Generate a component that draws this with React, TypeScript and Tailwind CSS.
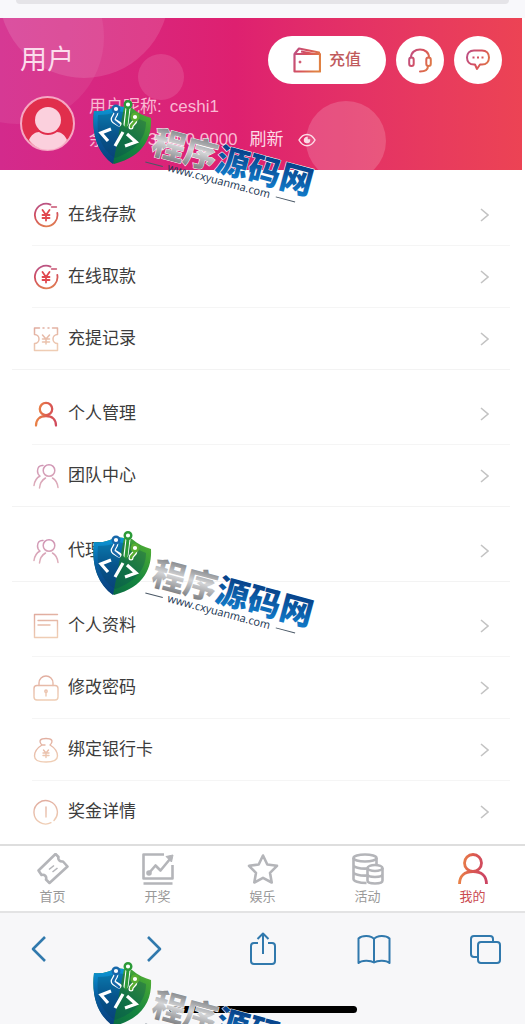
import type { ReactNode } from "react"

const FONT = "font-['Liberation_Sans','Noto_Sans_CJK_SC',sans-serif]"

type IconProps = { children: ReactNode; stroke?: string; width?: number }

function RowIcon({ children, stroke = "url(#peach)", width = 1.4 }: IconProps) {
  return (
    <svg
      viewBox="0 0 26 26"
      className="size-[26px] shrink-0"
      fill="none"
      stroke={stroke}
      strokeWidth={width}
      strokeLinecap="round"
      strokeLinejoin="round"
      aria-hidden="true"
    >
      {children}
    </svg>
  )
}

const YenIcon = () => (
  <RowIcon stroke="url(#berry)" width={1.8}>
    <path d="M17.500 2.600A11.300 11.300 0 1 0 24.300 11" />
    <path d="M18.500 5h5" strokeWidth={1.3} />
    <path d="M9.500 8l3.500 5 3.500-5M9.500 13h7M9.500 16h7M13 13v5.500" stroke="#e0484f" />
  </RowIcon>
)

const RecordIcon = () => (
  <RowIcon width={1.5}>
    <path d="M1.500 2h5M10 2h1M15 2h1M19.500 2h5v6.500a4.500 4.500 0 0 0 0 9V24.500h-23V17.500a4.500 4.500 0 0 0 0-9V2" />
    <path d="M9.500 9l3.500 4 3.500-4M9.500 13h7M9.500 16h7M13 13v5" />
  </RowIcon>
)

const PersonIcon = () => (
  <RowIcon stroke="url(#flame)" width={2.3}>
    <circle cx="13" cy="8" r="6.200" />
    <path d="M3 24.500c0-6 4-9.500 10-9.500s10 3.500 10 9.500" />
  </RowIcon>
)

const TeamIcon = () => (
  <RowIcon stroke="url(#mauve)" width={1.5}>
    <circle cx="16" cy="7.500" r="5.800" />
    <path d="M6.500 25c.5-5 2.500-8 6-10M19.500 15c3.500 2 5 5 5.500 9.500" />
    <path d="M10 2.500C6.500 2 4.500 4.500 4.500 8c0 2.500 1 4 2.500 5-3.500 2-5.500 5-6 9.500" />
  </RowIcon>
)

const ProfileIcon = () => (
  <RowIcon>
    <path d="M24.500 1.500h-23v23h23v-17H5M5 12h12" />
  </RowIcon>
)

const LockIcon = () => (
  <RowIcon>
    <rect x="1" y="10.500" width="24" height="14.500" rx="3" />
    <path d="M6 10.500V8a7 7 0 0 1 14 0v2.500M13 17v4" />
    <circle cx="13" cy="16.200" r="1.200" />
  </RowIcon>
)

const BagIcon = () => (
  <RowIcon>
    <path d="M9 8C7 6 6.500 4.500 7.500 3c1.500-2 9.500-2 11 0 1 1.500.5 3-1.500 5 5 3 7.500 6.500 7.500 11 0 4-3 6-11.500 6S1.500 23 1.500 19C1.500 14.500 4 11 9 8h3" />
    <path d="M10.500 13l2.500 3 2.500-3M10 16h6M10 18.500h6M13 16v4.500" />
  </RowIcon>
)

const InfoIcon = () => (
  <RowIcon>
    <path d="M21 21.500a11.700 11.700 0 1 0-3 2.200M13 8v10" />
  </RowIcon>
)

const groups = [
  [
    { label: "在线存款", icon: <YenIcon /> },
    { label: "在线取款", icon: <YenIcon /> },
    { label: "充提记录", icon: <RecordIcon /> },
  ],
  [
    { label: "个人管理", icon: <PersonIcon /> },
    { label: "团队中心", icon: <TeamIcon /> },
  ],
  [{ label: "代理中心", icon: <TeamIcon /> }],
  [
    { label: "个人资料", icon: <ProfileIcon /> },
    { label: "修改密码", icon: <LockIcon /> },
    { label: "绑定银行卡", icon: <BagIcon /> },
    { label: "奖金详情", icon: <InfoIcon /> },
  ],
]

const tabs = [
  {
    label: "首页",
    icon: (
      <g>
        <path d="M18.500 1l3 3c-.8 2.500 1.200 5 4.500 4.500l4.500 5L12.500 30l-3.500-3.500c1-3-1.500-5.500-4.500-4.500L1.500 17.500z" />
        <path d="M12 16.500l5-4M15.500 19l5-4" strokeWidth="1.600" />
      </g>
    ),
  },
  {
    label: "开奖",
    icon: (
      <g>
        <path d="M22 1.500H1.500v24h29V12M1.500 30.500h29" />
        <path d="M7 20l6.500-7.500 5 5L28 6" />
        <path d="M24 3.500l7-1.500-1.500 7z" fill="#b4b5b9" strokeWidth="1" />
        <circle cx="7" cy="20" r="1.500" fill="#b4b5b9" />
      </g>
    ),
  },
  {
    label: "娱乐",
    icon: <path d="M16 2.500l4.300 9 9.700 1.300-7 7 1.700 9.700L16 24.800l-8.700 4.700L9 19.800l-7-7 9.700-1.300z" />,
  },
  {
    label: "活动",
    icon: (
      <g>
        <ellipse cx="13" cy="5" rx="11.500" ry="3.500" />
        <path d="M1.500 5v21c0 2 5 4 13 4M24.500 5v6M1.500 12c0 2 6 4 14 3.500M1.500 19c0 2 6 4 14 3.500" />
        <ellipse cx="23" cy="15" rx="7.500" ry="3" />
        <path d="M15.500 15v12.500c0 4 15 4 15 0V15M15.500 21c0 4 15 4 15 0" />
      </g>
    ),
  },
  {
    label: "我的",
    active: true,
    icon: (
      <g stroke="url(#flame)" strokeWidth="2.800">
        <circle cx="16" cy="10" r="8.500" />
        <path d="M2.500 31c0-8 5-12.500 13.500-12.500S29.500 23 29.500 31" />
      </g>
    ),
  },
]

const browserButtons = [
  { label: "后退", icon: <path d="M26 8L14 20l12 12" strokeWidth="2.600" /> },
  { label: "前进", icon: <path d="M17 8l12 12-12 12" strokeWidth="2.600" /> },
  {
    label: "分享",
    icon: <path d="M15 14h-4a3 3 0 0 0-3 3v15a3 3 0 0 0 3 3h18a3 3 0 0 0 3-3V17a3 3 0 0 0-3-3h-4M20 25V5M14.500 10L20 4.500 25.500 10" />,
  },
  {
    label: "书签",
    icon: <path d="M20 10v23M20 10c-3-4-12-4-15.500-.5V34c3-3 12-3 15.500-.5 3.500-2.500 12.500-2.500 15.500.5V9.500C32 6 23 6 20 10z" />,
  },
  {
    label: "标签页",
    icon: (
      <g>
        <rect x="12" y="13" width="22" height="21" rx="3" />
        <path d="M12 28H8a3 3 0 0 1-3-3V10a3 3 0 0 1 3-3h16a3 3 0 0 1 3 3v3" />
      </g>
    ),
  },
]

function Defs() {
  return (
    <svg className="absolute size-0" aria-hidden="true">
      <defs>
        <linearGradient id="berry" gradientUnits="userSpaceOnUse" x1="6" y1="0" x2="12" y2="26">
          <stop offset="0" stopColor="#b5568d" />
          <stop offset="0.500" stopColor="#d24c5c" />
          <stop offset="1" stopColor="#e07f52" />
        </linearGradient>
        <linearGradient id="peach" gradientUnits="userSpaceOnUse" x1="0" y1="0" x2="6" y2="26">
          <stop offset="0" stopColor="#dfa99d" />
          <stop offset="1" stopColor="#efcdb4" />
        </linearGradient>
        <linearGradient id="mauve" gradientUnits="userSpaceOnUse" x1="0" y1="0" x2="0" y2="26">
          <stop offset="0" stopColor="#cf94b4" />
          <stop offset="1" stopColor="#dfb0bb" />
        </linearGradient>
        <linearGradient id="flame" gradientUnits="userSpaceOnUse" x1="2" y1="12" x2="28" y2="16">
          <stop offset="0" stopColor="#ec8a45" />
          <stop offset="0.500" stopColor="#db5a50" />
          <stop offset="1" stopColor="#cc4562" />
        </linearGradient>
        <linearGradient id="action" gradientUnits="userSpaceOnUse" x1="0" y1="0" x2="28" y2="12">
          <stop offset="0" stopColor="#b8508c" />
          <stop offset="0.500" stopColor="#d7505c" />
          <stop offset="1" stopColor="#e08243" />
        </linearGradient>
        <linearGradient id="shieldBlue" x1="0" y1="0" x2="0" y2="1">
          <stop offset="0" stopColor="#0d9ad8" />
          <stop offset="0.500" stopColor="#075b9e" />
          <stop offset="1" stopColor="#0a3f7c" />
        </linearGradient>
        <linearGradient id="shieldGreen" x1="1" y1="0" x2="0" y2="1">
          <stop offset="0" stopColor="#5bb531" />
          <stop offset="0.500" stopColor="#14843f" />
          <stop offset="1" stopColor="#066045" />
        </linearGradient>
        <linearGradient id="silver" x1="0" y1="0" x2="0" y2="1">
          <stop offset="0.200" stopColor="#85878a" />
          <stop offset="0.500" stopColor="#d4d5d7" />
          <stop offset="0.850" stopColor="#808286" />
        </linearGradient>
        <linearGradient id="ocean" x1="0" y1="0" x2="0" y2="1">
          <stop offset="0.200" stopColor="#073f86" />
          <stop offset="1" stopColor="#1388d8" />
        </linearGradient>
      </defs>
    </svg>
  )
}

function Watermark({ className }: { className: string }) {
  return (
    <svg
      viewBox="0 0 240 120"
      className={`pointer-events-none absolute left-[92px] h-[120px] w-[240px] overflow-visible ${className}`}
    >
      <path d="M2 13c8 1 16-1 22-5l16 2c6 5 12 8 19 10 1 18-6 38-37 46C7 56-1 38 2 13z" fill="url(#shieldGreen)" />
      <path d="M2 13c8 1 16-1 22-5l8 1-11 57C7 56-1 38 2 13z" fill="url(#shieldBlue)" />
      <path d="M6 17c7 0 13-1 19-4l13 2c5 4 10 7 16 9 0 14-8 28-31 36C9 51 4 37 6 17z" fill="#063f58" opacity="0.280" />
      <g fill="none" strokeLinecap="round">
        <g stroke="#fff" strokeWidth="5">
          <path d="M24 14c0 5-5 6-2 9l5 3M36 10l-2 16M43 22c0 4-4 3-4 7" />
        </g>
        <path d="M24 14c0 5-5 6-2 9l5 4" stroke="#1768aa" strokeWidth="2.500" />
        <path d="M36 10l-2 18" stroke="#2b9a37" strokeWidth="3" />
        <path d="M43 22c0 4-4 3-4 7" stroke="#58ad32" strokeWidth="2.500" />
      </g>
      <g fill="#fff" strokeWidth="2.400">
        <circle cx="24" cy="11" r="3.300" stroke="#1768aa" />
        <circle cx="36" cy="6.500" r="3.300" stroke="#2b9a37" />
        <circle cx="43" cy="19" r="3.300" stroke="#58ad32" />
      </g>
      <path
        d="M19 31L9 35l7 8M31 34l-8 14M35 36l9 8-11 4"
        fill="none"
        stroke="#fff"
        strokeWidth="3.200"
      />
      <g transform="translate(55 54) rotate(15)">
        <g
          className="font-['Noto_Sans_CJK_SC',sans-serif] text-[33px] font-black"
          stroke="#fff"
          strokeWidth="1"
          paintOrder="stroke"
        >
          <text x="3" y="0" fill="url(#silver)">程序</text>
          <text x="69" y="0" fill="url(#ocean)">源码网</text>
        </g>
        <text x="24" y="13" className="font-['Open_Sans',sans-serif] text-[11px] font-medium" fill="#16324f">
          www.cxyuanma.com
        </text>
        <path d="M1 10h18M136 10h20" stroke="#4a5866" strokeWidth="1" />
      </g>
    </svg>
  )
}

function Header() {
  return (
    <header className="relative mr-[3px] overflow-hidden bg-linear-to-r from-[#d32a8c] via-[#de2070] via-45% to-[#ec4354] px-5 pt-[18px] pb-[19px]">
      <svg className="absolute inset-0 size-full" fill="#fff" aria-hidden="true">
        <circle cx="17" cy="19" r="87" opacity="0.070" />
        <circle cx="84" cy="-25" r="85" opacity="0.120" />
        <circle cx="161" cy="59" r="23" opacity="0.120" />
        <circle cx="346" cy="123" r="40" opacity="0.170" />
      </svg>
      <div className="relative flex items-center justify-between">
        <h1 className="text-[27px] leading-8 text-[#fbdcec]">用户</h1>
        <div className="flex gap-[10px]">
          <button className="flex h-12 w-[118px] items-center justify-center gap-2 rounded-full bg-white text-[16px] font-medium text-[#c05a5c]">
            <svg viewBox="0 0 28 26" className="h-[26px] w-7" fill="none" stroke="url(#action)" strokeWidth="2.200" strokeLinejoin="round" aria-hidden="true">
              <path d="M1.500 7h25.500v17.500H1.500zM1.500 7L6 1.500l20 4V7M8 4.500l13 2.500" />
              <circle cx="7" cy="15" r="1" fill="#b8508c" strokeWidth="1" />
            </svg>
            充值
          </button>
          <button aria-label="客服" className="flex size-12 items-center justify-center rounded-full bg-white">
            <svg viewBox="0 0 24 25" className="h-[25px] w-6" fill="none" stroke="url(#action)" strokeWidth="2" strokeLinecap="round" aria-hidden="true">
              <path d="M3 9.500C3 4.500 7 1.500 12 1.500s9 3 9 8M20 18c0 4-3 5.500-8 5.500" />
              <rect x="1.200" y="9.500" width="4.500" height="8.500" rx="2.200" />
              <rect x="18.300" y="9.500" width="4.500" height="8.500" rx="2.200" />
            </svg>
          </button>
          <button aria-label="消息" className="flex size-12 items-center justify-center rounded-full bg-white">
            <svg viewBox="0 0 24 22" className="h-[22px] w-6" fill="none" stroke="url(#action)" strokeWidth="2" strokeLinejoin="round" aria-hidden="true">
              <path d="M8 1.500h8c4.500 0 7 3 7 7s-2.500 7-7 7h-2L11 20l-2-4.500H8c-4.500 0-7-3-7-7s2.500-7 7-7z" />
              <path d="M6.500 8.500h2M11 8.500h2M15.500 8.500h2" />
            </svg>
          </button>
        </div>
      </div>
      <div className="relative mt-3 flex items-center gap-[14px] text-[17px] leading-5 text-[#f9b9d3]">
        <svg viewBox="0 0 55 55" className="size-[55px]" role="img" aria-label="头像">
          <circle cx="27.500" cy="27.500" r="26.500" fill="#e12e4c" stroke="#f6a6c3" strokeWidth="2" />
          <circle cx="28" cy="24" r="13" fill="#fbd0dd" />
          <path d="M9 44c2-5 6-8 10-8 5 4 13 4 18 0 4 0 8 3 10 8-9 13-29 13-38 0z" fill="#fbd0dd" />
        </svg>
        <div className="flex flex-col gap-[13px]">
          <p className="flex gap-2">
            <span>用户昵称:</span>
            <span>ceshi1</span>
          </p>
          <div className="flex items-center">
            <span>余额:</span>
            <span className="ml-5">35000.0000</span>
            <button className="ml-3 text-[17px] text-[#fcdbe6]">刷新</button>
            <button aria-label="显示余额" className="ml-[14px]">
              <svg viewBox="0 0 18 14" className="h-[14px] w-[18px]" fill="none" stroke="#fcdbe6" strokeWidth="1.500" aria-hidden="true">
                <path d="M1 7c4-7.500 12-7.500 16 0-4 7.500-12 7.500-16 0z" />
                <path d="M9 4.500A2.500 2.500 0 1 0 11.500 7H9z" fill="#fcdbe6" />
              </svg>
            </button>
          </div>
        </div>
      </div>
    </header>
  )
}

export default function App() {
  return (
    <div className={`relative flex min-h-screen flex-col overflow-hidden bg-white ${FONT}`}>
      <Defs />
      <div className="h-[18px] bg-[#f8f8fb] px-4">
        <div className="h-1 rounded-b-xl bg-[#e5e4e8]" />
      </div>

      <Header />

      <main className="pt-px pb-px">
        {groups.map((rows, i) => (
          <ul key={i} className="mr-[15px] ml-3 border-b border-[#f3f3f3] pt-[13px] last:border-transparent">
            {rows.map((row, j) => (
              <li key={row.label} className={`ml-5 ${j < rows.length - 1 ? "border-b border-[#f5f5f5]" : ""}`}>
                <a href="#" className="flex h-[61px] items-center gap-[9px] pr-[21px] pl-px text-[17px] text-[#3c3c3c]">
                  {row.icon}
                  <span className="flex-1">{row.label}</span>
                  <svg viewBox="0 0 9 14" className="h-[14px] w-[9px]" fill="none" stroke="#c3c3c3" strokeWidth="1.600" aria-hidden="true">
                    <path d="M1 1l7 6-7 6" />
                  </svg>
                </a>
              </li>
            ))}
          </ul>
        ))}
      </main>

      <nav className="grid grid-cols-5 border-t-2 border-[#dedede] bg-white pt-[7px] pb-1">
        {tabs.map((tab) => (
          <a
            key={tab.label}
            href="#"
            className={`flex flex-col items-center gap-[2px] text-[13px] leading-5 ${tab.active ? "text-[#cb4c52]" : "text-[#999]"}`}
          >
            <svg viewBox="0 0 32 32" className="size-8" fill="none" stroke="#b4b5b9" strokeWidth="2.600" strokeLinejoin="round" aria-hidden="true">
              {tab.icon}
            </svg>
            {tab.label}
          </a>
        ))}
      </nav>

      <footer className="flex flex-1 flex-col border-t-2 border-[#e3e3e4] bg-[#f7f7f9]">
        <div className="flex justify-between px-[19px] pt-4">
          {browserButtons.map((b) => (
            <button key={b.label} aria-label={b.label} className="size-10">
              <svg viewBox="0 0 40 40" className="size-10" fill="none" stroke="#3179ad" strokeWidth="2" strokeLinejoin="round" aria-hidden="true">
                {b.icon}
              </svg>
            </button>
          ))}
        </div>
        <div className="mx-auto mt-auto mb-[11px] h-[7px] w-[188px] rounded-full bg-black" />
      </footer>

      <Watermark className="top-[98px]" />
      <Watermark className="top-[529px]" />
      <Watermark className="top-[960px]" />
    </div>
  )
}
